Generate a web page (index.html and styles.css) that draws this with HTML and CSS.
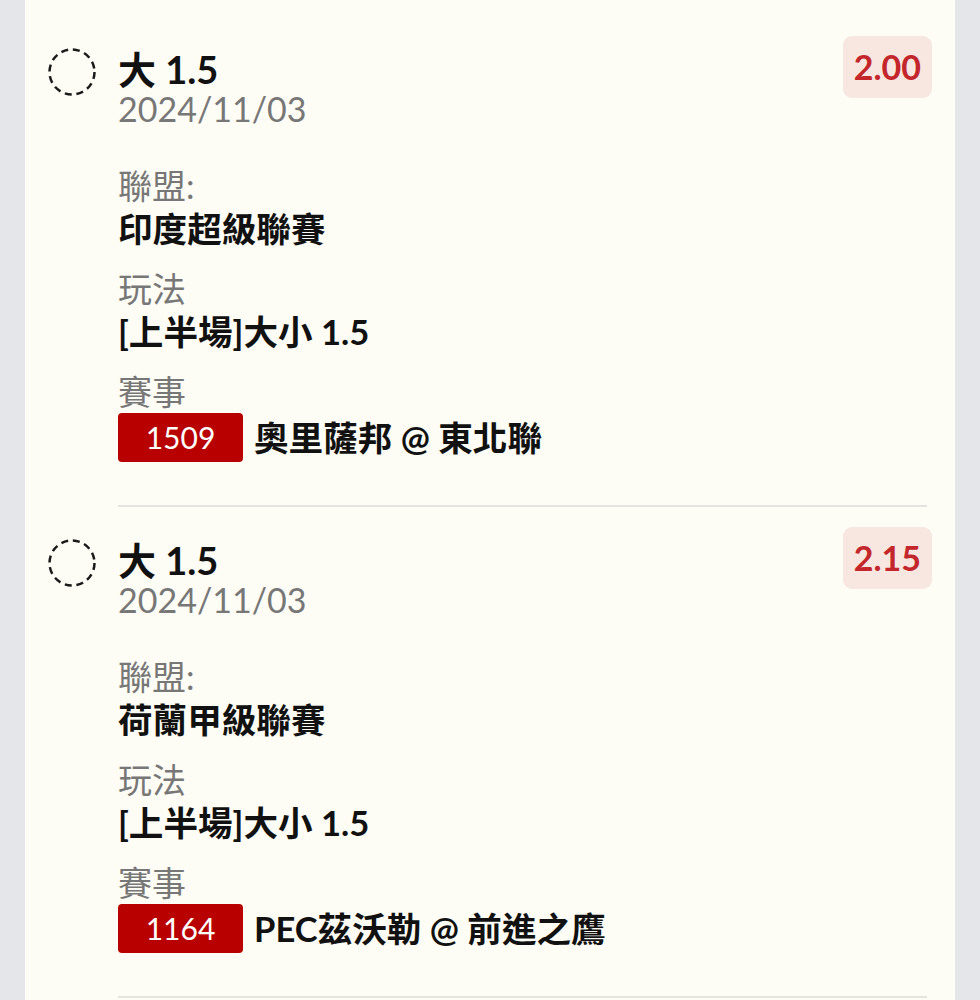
FILE: index.html
```html
<!DOCTYPE html>
<html lang="zh-Hant">
  <head>
    <meta charset="UTF-8" />
    <meta name="viewport" content="width=device-width, initial-scale=1.0" />
    <title>注單</title>
    <link rel="stylesheet" href="styles.css">
  </head>
  <body>
    <div class="card">
      <div class="bet">
        <div class="bet-head">
          <svg class="check" width="48" height="48" viewBox="0 0 48 48">
            <circle cx="24" cy="24" r="22.5" fill="none" stroke="#1a1a1a" stroke-width="2.5" stroke-dasharray="7 4.8" />
          </svg>
          <div class="bet-title">
            <div class="pick">大 1.5</div>
            <div class="date">2024/11/03</div>
          </div>
          <span class="odds">2.00</span>
        </div>
        <div class="bet-info">
          <div class="field">
            <div class="label">聯盟:</div>
            <div class="value">印度超級聯賽</div>
          </div>
          <div class="field">
            <div class="label">玩法</div>
            <div class="value">[上半場]大小 1.5</div>
          </div>
          <div class="field">
            <div class="label">賽事</div>
            <div class="match">
              <span class="match-no">1509</span>
              <span class="value">奧里薩邦 @ 東北聯</span>
            </div>
          </div>
        </div>
      </div>
      <hr class="sep" />

      <div class="bet">
        <div class="bet-head">
          <svg class="check" width="48" height="48" viewBox="0 0 48 48">
            <circle cx="24" cy="24" r="22.5" fill="none" stroke="#1a1a1a" stroke-width="2.5" stroke-dasharray="7 4.8" />
          </svg>
          <div class="bet-title">
            <div class="pick">大 1.5</div>
            <div class="date">2024/11/03</div>
          </div>
          <span class="odds">2.15</span>
        </div>
        <div class="bet-info">
          <div class="field">
            <div class="label">聯盟:</div>
            <div class="value">荷蘭甲級聯賽</div>
          </div>
          <div class="field">
            <div class="label">玩法</div>
            <div class="value">[上半場]大小 1.5</div>
          </div>
          <div class="field">
            <div class="label">賽事</div>
            <div class="match">
              <span class="match-no">1164</span>
              <span class="value">PEC茲沃勒 @ 前進之鷹</span>
            </div>
          </div>
        </div>
      </div>
      <hr class="sep" />
    </div>
  </body>
</html>
```

FILE: styles.css
```css
* {
  box-sizing: border-box;
}

body {
  margin: 0;
  background: #e5e6e9;
  font-family: "Lato", "Noto Sans CJK TC", sans-serif;
  color: #111;
}

.card {
  margin: 0 25px;
  padding: 16px 23px 0;
  background: #fefdf5;
  min-height: 1000px;
}

.bet {
  padding: 20px 0 43px;
}

.bet-head {
  display: flex;
  align-items: flex-start;
}

.check {
  flex: none;
  margin-top: 12px;
}

.bet-title {
  flex: 1;
  margin: 13px 0 0 22px;
}

.pick {
  font-size: 38px;
  font-weight: 700;
  line-height: 40px;
}

.date {
  font-size: 34px;
  line-height: 39px;
  color: #777;
}

.odds {
  flex: none;
  height: 62px;
  padding: 0 11px;
  line-height: 62px;
  border-radius: 9px;
  background: #f8e7e1;
  color: #c3262b;
  font-size: 34px;
  font-weight: 700;
}

.bet-info {
  margin: 36px 0 0 70px;
  display: flex;
  flex-direction: column;
  gap: 17px;
}

.label {
  font-size: 34px;
  line-height: 43px;
  color: #777;
}

.value {
  font-size: 34.6px;
  line-height: 43px;
  font-weight: 700;
}

.match {
  display: flex;
  align-items: center;
  gap: 11px;
}

.match-no {
  width: 125px;
  height: 49px;
  line-height: 49px;
  text-align: center;
  border-radius: 4px;
  background: #b80000;
  color: #fff;
  font-size: 30px;
}

.sep {
  margin: 0 5px 0 70px;
  border: none;
  border-top: 2px solid #e6e4de;
}
```
